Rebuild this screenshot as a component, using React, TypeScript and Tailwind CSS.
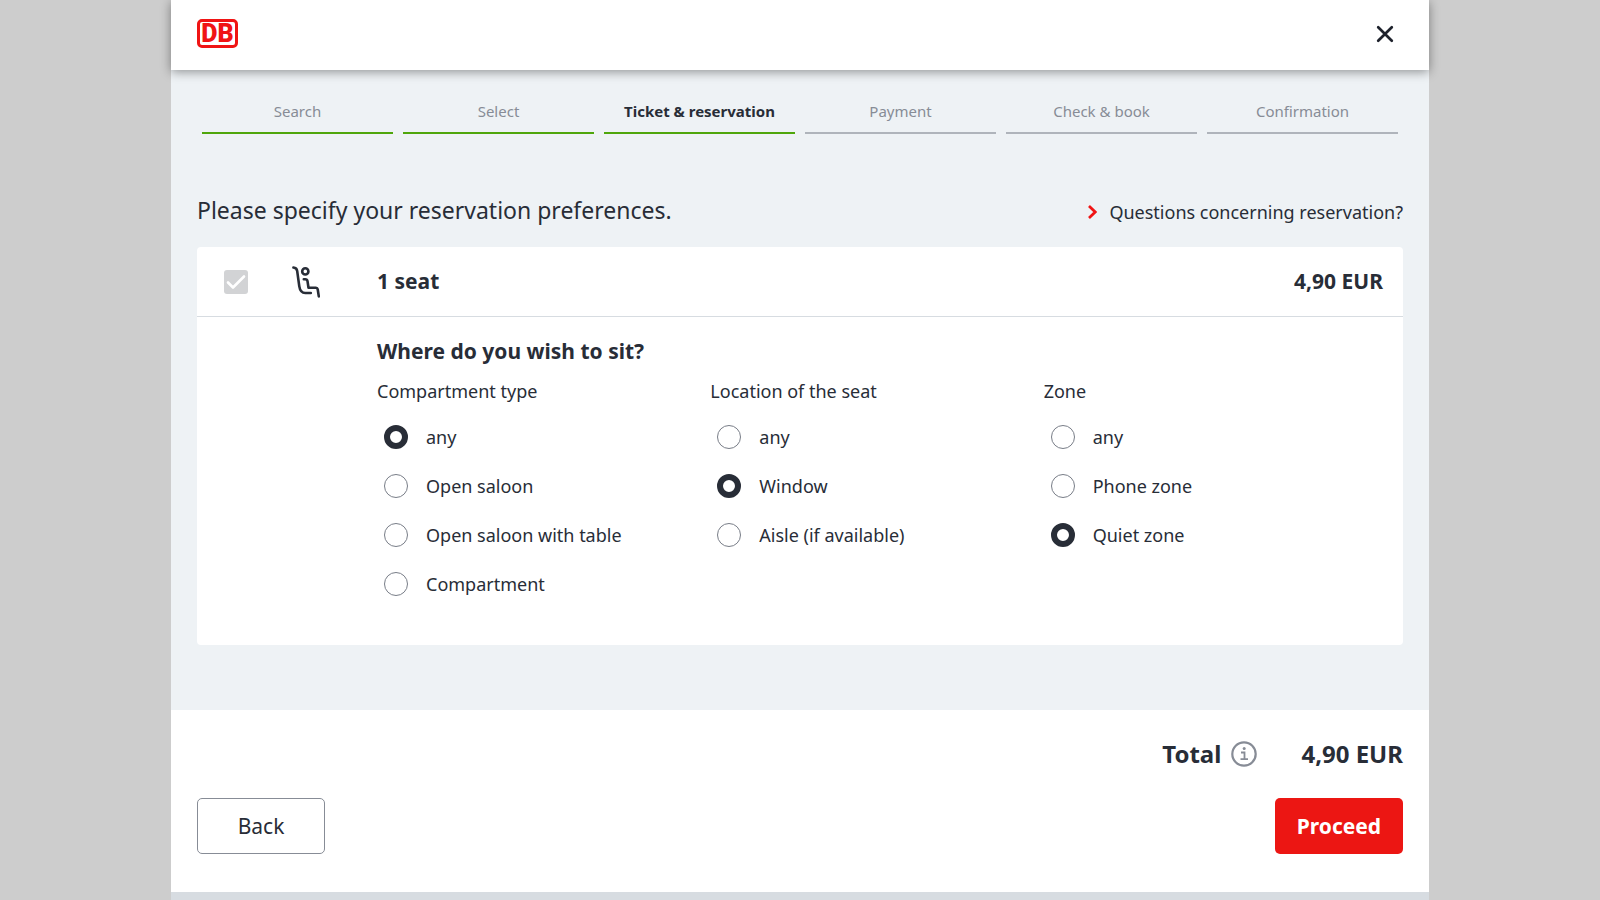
import React, { useState } from 'react';

interface Step {
  label: string;
  state: 'done' | 'current' | 'open';
}

interface SeatQuestion {
  id: string;
  title: string;
  options: string[];
  initial: string;
}

const steps: Step[] = [
  { label: 'Search', state: 'done' },
  { label: 'Select', state: 'done' },
  { label: 'Ticket & reservation', state: 'current' },
  { label: 'Payment', state: 'open' },
  { label: 'Check & book', state: 'open' },
  { label: 'Confirmation', state: 'open' },
];

const questions: SeatQuestion[] = [
  {
    id: 'compartment',
    title: 'Compartment type',
    options: ['any', 'Open saloon', 'Open saloon with table', 'Compartment'],
    initial: 'any',
  },
  {
    id: 'location',
    title: 'Location of the seat',
    options: ['any', 'Window', 'Aisle (if available)'],
    initial: 'Window',
  },
  {
    id: 'zone',
    title: 'Zone',
    options: ['any', 'Phone zone', 'Quiet zone'],
    initial: 'Quiet zone',
  },
];

const stepStyles: Record<Step['state'], string> = {
  done: 'border-[#4fa60b] text-[#878c96]',
  current: 'border-[#4fa60b] text-[#282d37] font-bold',
  open: 'border-[#afb4bb] text-[#878c96]',
};

const Logo: React.FC = () => (
  <div className="flex h-[29px] w-[41px] items-center justify-center rounded-[5px] border-[3px] border-[#f01414] bg-white font-[Roboto,sans-serif] text-[25px] leading-none font-black text-[#f01414]">
    DB
  </div>
);

const SeatIcon: React.FC = () => (
  <svg className="h-8 w-7" viewBox="0 0 28 32" fill="none" stroke="#282d37" strokeWidth="2.6" strokeLinecap="round" strokeLinejoin="round" aria-hidden="true">
    <path d="M1.400 1.500c2.600.2 3.500 1.200 3.800 3.600l2.100 15.300c.7 4.800 2.300 6.600 6 6.600h5.500" />
    <circle cx="13.300" cy="5.400" r="3.100" />
    <path d="M11.800 13.200h1.400c1.400 0 2.100.6 2.300 1.900l1 6.600h7.500c1 0 1.500.5 1.700 1.500l1.100 7.200" />
  </svg>
);

const QuestionColumn: React.FC<{ question: SeatQuestion }> = ({ question }) => {
  const [selected, setSelected] = useState(question.initial);

  return (
    <fieldset>
      <legend className="leading-6">{question.title}</legend>
      <div className="mt-[22px] flex flex-col gap-[25px] pl-[7px]">
        {question.options.map((option) => (
          <label key={option} className="flex cursor-pointer items-center gap-[18px] leading-6">
            <input
              type="radio"
              name={question.id}
              checked={selected === option}
              onChange={() => setSelected(option)}
              className="size-6 shrink-0 appearance-none rounded-full border border-[#787d87] bg-white checked:border-[6px] checked:border-[#282d37]"
            />
            {option}
          </label>
        ))}
      </div>
    </fieldset>
  );
};

export default function App() {
  return (
    <div className="min-h-screen bg-[#cdcdcd] font-['Noto_Sans',sans-serif] text-lg text-[#282d37]">
      <div className="mx-auto flex min-h-screen max-w-[1258px] flex-col bg-[#eef2f5]">
        <header className="relative flex h-[70px] items-start justify-between bg-white pt-[19px] pr-[35px] pl-[26px] shadow-[0_2px_10px_rgba(0,0,0,0.4)]">
          <Logo />
          <button type="button" aria-label="Close" className="flex h-[30px] cursor-pointer items-center">
            <svg className="size-[18px]" viewBox="0 0 18 18" stroke="#1e222c" strokeWidth="2.700" strokeLinecap="round" aria-hidden="true">
              <path d="M2.200 2.200l13.600 13.600M15.800 2.200L2.200 15.800" />
            </svg>
          </button>
        </header>

        <main className="flex-1 px-[26px]">
          <ol className="grid grid-cols-6 gap-[10px] px-[5px] pt-[29px] text-[15px]">
            {steps.map((step) => (
              <li
                key={step.label}
                aria-current={step.state === 'current' ? 'step' : undefined}
                className={`h-[35px] border-b-2 text-center leading-6 ${stepStyles[step.state]}`}
              >
                {step.label}
              </li>
            ))}
          </ol>

          <div className="mt-[60px] flex items-baseline justify-between">
            <h1 className="text-[23px] leading-8">Please specify your reservation preferences.</h1>
            <a href="#reservation" className="flex items-center gap-3">
              <svg className="h-[14px] w-[9px]" viewBox="0 0 9 14" fill="none" stroke="#f01414" strokeWidth="2.700" aria-hidden="true">
                <path d="M1 1l6.200 6L1 13" />
              </svg>
              Questions concerning reservation?
            </a>
          </div>

          <section className="mt-[21px] mb-[65px] rounded bg-white pb-[49px]">
            <div className="flex h-[70px] items-center border-b border-[#d7dce1] pr-5 pl-[27px] text-[21px] font-bold">
              <label className="relative mr-11 size-6">
                <input
                  type="checkbox"
                  defaultChecked
                  disabled
                  aria-label="1 seat"
                  className="block size-6 appearance-none rounded-[3px] bg-[#d2d3d5]"
                />
                <svg className="pointer-events-none absolute inset-0 size-6" viewBox="0 0 24 24" fill="none" stroke="#fff" strokeWidth="2.600" strokeLinecap="round" strokeLinejoin="round" aria-hidden="true">
                  <path d="M4 12.500l5 5L20 6.500" />
                </svg>
              </label>
              <SeatIcon />
              <h2 className="ml-[57px] flex-1">1 seat</h2>
              <span>4,90 EUR</span>
            </div>

            <div className="pt-5 pr-[26px] pl-[180px]">
              <h3 className="text-[21px] leading-7 font-bold">Where do you wish to sit?</h3>
              <div className="mt-[14px] grid grid-cols-3">
                {questions.map((question) => (
                  <QuestionColumn key={question.id} question={question} />
                ))}
              </div>
            </div>
          </section>
        </main>

        <footer className="border-b-8 border-[#d7dce1] bg-white px-[26px] pt-7 pb-[38px]">
          <div className="flex items-center justify-end text-2xl font-bold">
            <span>Total</span>
            <button type="button" aria-label="Price details" className="mr-11 ml-[10px] cursor-pointer">
              <svg className="block size-[26px]" viewBox="0 0 26 26" fill="none" stroke="#878c96" strokeWidth="2.200" aria-hidden="true">
                <circle cx="13" cy="13" r="11.700" />
                <path d="M10 11.500h3.500v6.500M9.500 18.200h7.500" strokeWidth="1.800" />
                <circle cx="13.200" cy="7.600" r="1.500" fill="#878c96" stroke="none" />
              </svg>
            </button>
            <span>4,90 EUR</span>
          </div>
          <div className="mt-7 flex justify-between text-[21px]">
            <button type="button" className="h-14 w-32 cursor-pointer rounded-[5px] border border-[#878c96] bg-white">
              Back
            </button>
            <button type="button" className="h-14 w-32 cursor-pointer rounded-[5px] bg-[#ec1613] font-bold text-white">
              Proceed
            </button>
          </div>
        </footer>
      </div>
    </div>
  );
}
